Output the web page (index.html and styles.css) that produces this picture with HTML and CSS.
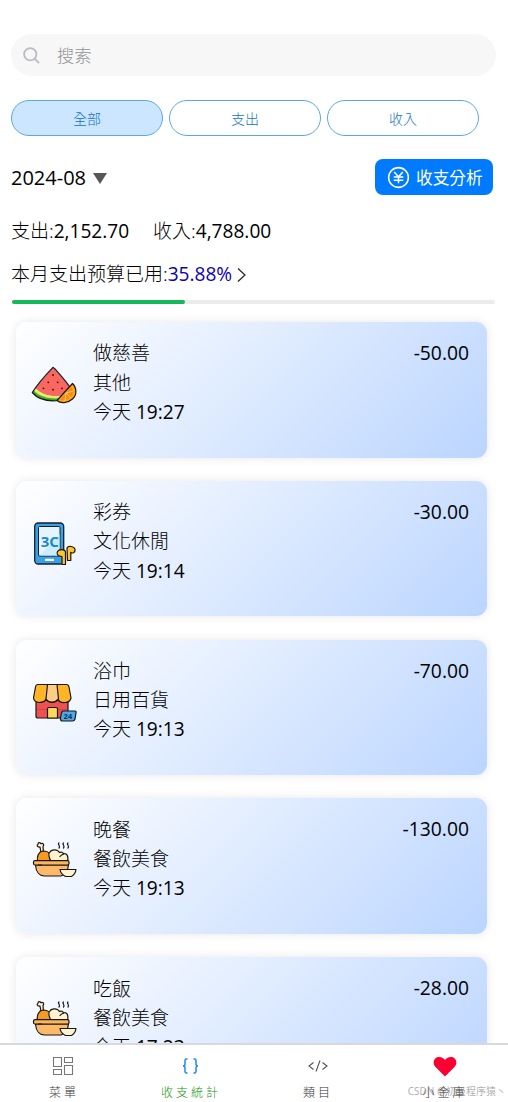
FILE: index.html
```html
<!DOCTYPE html>
<html lang="zh-Hant">
<head>
<meta charset="utf-8">
<meta name="viewport" content="width=device-width, initial-scale=1">
<title>收支統計</title>
<link rel="stylesheet" href="styles.css">
</head>
<body>
<svg class="defs" aria-hidden="true">
  <symbol id="bowl" viewBox="0 -1.500 60 55">
    <g stroke="#161616" stroke-width="1.2" stroke-linejoin="round" stroke-linecap="round">
      <path d="M16 18 15 12.500C12 13 11.500 10.500 13 9.700 13 7.800 15.500 7.700 16 9.300 18 8.200 19.800 10.300 18 12L18.500 18Z" fill="#fff3d4"/>
      <path d="M12.500 27C11.500 21 14 17 18 16.500 24 16.500 27.500 21 28 27Z" fill="#f79a20"/>
      <path d="M26 27C24 23 23 20 24.500 18 26 15 32 14 34.500 18 36 17 38 18 38.500 19.500 41 18 44 21 42.500 27Z" fill="#fff3cf"/>
      <path d="M35 22C36 20.500 37.500 20 38.500 19.500" fill="none"/>
      <path d="M10.500 30.500C11 38 15 41.500 19.500 41.500H36C40 41 43 36 43.500 30.500Z" fill="#fcb96a"/>
      <rect x="8.500" y="26.200" width="35.500" height="4.300" rx="1.500" fill="#fcb65a"/>
      <path d="M13.500 30.500H16.500" fill="none"/>
      <path d="M35 35H51C50.500 39 48 41 46.500 42H40.500C37.500 40.500 35.500 38 35 35Z" fill="#fff3cf"/>
      <path d="M26 9C24 10 28 12 26 14M30.500 9C28.500 10 32.500 12 30.500 14M35 9C33 10 37 12 35 14" fill="none" transform="translate(8 -.5)"/>
    </g>
  </symbol>
</svg>

<main class="page">
  <div class="search">
    <svg class="search-icon" viewBox="0 0 18 18"><circle cx="7.700" cy="7.700" r="6.500"/><path d="M12.300 12.300 17 17"/></svg>
    <span>搜索</span>
  </div>

  <div class="tabs">
    <div class="tab active">全部</div>
    <div class="tab">支出</div>
    <div class="tab">收入</div>
  </div>

  <div class="toolbar">
    <div class="month">2024-08 <i class="caret"></i></div>
    <div class="analyse">
      <svg viewBox="0 0 24 24"><circle cx="12" cy="12" r="10.300"/><path d="M7.500 6.300 12 11.300 16.500 6.300M12 11.300V18M7 11.500H17M7 14.800H17"/></svg>
      <span>收支分析</span>
    </div>
  </div>

  <div class="totals"><div>支出:<span class="num">2,152.70</span></div><div>收入:<span class="num">4,788.00</span></div></div>
  <div class="budget"><div>本月支出预算已用:<span class="num used">35.88%</span></div><svg viewBox="0 0 9 16"><path d="M1 1.500 8 8 1 14.500"/></svg></div>
  <div class="progress"><div class="progress-fill"></div></div>

  <div class="list">
    <div class="card">
      <svg class="pic" viewBox="0 -3 60 55">
        <path d="M10 28.500 28 7.300 45 27 36 36C27 37.500 16 34.500 10 28.500Z" fill="#fa6660"/>
        <path d="M10.500 28 7.500 32.500C14 38.500 24 41 34 40L37 35.500C27 37.500 16 34.500 10.500 28Z" fill="#dcf06a"/>
        <path d="M8.700 30.500 7.300 32.500C14 39.500 25 41.500 34 40.500V38.300C24 39 15 37 8.700 30.500Z" fill="#45a72b"/>
        <path d="M28 7.300C29 7.300 40 20 45 27L34 40.500C24 41.500 13 39.500 7.300 32.500 12 25 22 13.500 28 7.300Z" fill="none" stroke="#171717" stroke-width="1.200" stroke-linejoin="round"/>
        <g fill="#241516"><circle cx="28" cy="15" r=".9"/><circle cx="23.300" cy="22.300" r=".9"/><circle cx="32.700" cy="22.300" r=".9"/><circle cx="18.500" cy="28.300" r=".9"/><circle cx="28" cy="29.700" r=".9"/><circle cx="37" cy="28.300" r=".9"/></g>
        <path d="M47.500 23.500C52 28 52 35 47.500 39 42.500 43.500 35.500 43.500 32 40.500Z" fill="#fca51c" stroke="#1b1710" stroke-width="1.200" stroke-linejoin="round"/>
        <path d="M46.500 27C49 32 48 35 45 37.500 42 40.500 38 40.500 35 39.500Z" fill="#f88c13"/>
        <path d="M41 33 48 31M41 33 46 38M41 33 40 41" stroke="#ffd264" stroke-width=".9"/>
      </svg>
      <div class="info"><div>做慈善</div><div>其他</div><div>今天 <span class="num">19:27</span></div></div>
      <div class="amount">-50.00</div>
    </div>

    <div class="card">
      <svg class="pic" viewBox="0 0 60 55">
        <rect x="9.700" y="7" width="29" height="41" rx="3.500" fill="#3aa0e6" stroke="#12202b" stroke-width="1.300"/>
        <rect x="13.500" y="10.500" width="21.500" height="29.500" rx="1" fill="#e5f5ff" stroke="#12202b"/>
        <path d="M15 39.500 34.500 18V39.500Z" fill="#ccecff"/>
        <text x="24.800" y="30.500" class="pic-3c">3C</text>
        <rect x="20" y="42.700" width="9" height="2.300" rx=".5" fill="#fff"/>
        <g fill="#ffc52e" stroke="#1b1710" stroke-width="1.200" stroke-linejoin="round">
          <path d="M37 40.500C33 40.500 31 38 32.500 35.500 34 33 40 33 40.500 36V48.500H37Z"/>
          <path d="M42 32C43 29.500 49.500 30 50 33.500 50.500 37 47 37.500 45.800 36.500V44.500H42.500Z"/>
        </g>
      </svg>
      <div class="info"><div>彩券</div><div>文化休閒</div><div>今天 <span class="num">19:14</span></div></div>
      <div class="amount">-30.00</div>
    </div>

    <div class="card">
      <svg class="pic" viewBox="0 0 60 55">
        <g stroke="#181818" stroke-width="1.200" stroke-linejoin="round">
          <path d="M11 25H43V43H13Q11 43 11 41Z" fill="#f0504f"/>
          <path d="M12 34.500H22M32.500 34.500H42" stroke="#c9404a" stroke-width=".8" fill="none"/>
          <path d="M22.500 43V34Q22.500 32.500 24 32.500H31Q32.500 32.500 32.500 34V43Z" fill="#ffd85e"/>
          <path d="M12.500 9.500H41.500Q43.500 9.500 44 12L46 23Q45 27.500 40 27.500 34 28 33 24 31 27.500 27 27.500 23 27.500 21 24 20 27.500 14 27.500 9 27 8.500 23L10.500 12Q11 9.500 12.500 9.500Z" fill="#ffb526"/>
          <path d="M22.500 9.500H32L33.500 24Q31 27 27 27 23 27 21 24Z" fill="#ffcc87"/>
          <path d="M38 36H50Q51.500 36 51 38L50 44Q49.500 46 47.500 46H38Q35 46 35.500 43L36.500 38Q37 36 38 36Z" fill="#4ca9eb"/>
        </g>
        <text x="43" y="43.800" class="pic-24">24</text>
      </svg>
      <div class="info"><div>浴巾</div><div>日用百貨</div><div>今天 <span class="num">19:13</span></div></div>
      <div class="amount">-70.00</div>
    </div>

    <div class="card">
      <svg class="pic"><use href="#bowl"/></svg>
      <div class="info"><div>晚餐</div><div>餐飲美食</div><div>今天 <span class="num">19:13</span></div></div>
      <div class="amount">-130.00</div>
    </div>

    <div class="card">
      <svg class="pic"><use href="#bowl"/></svg>
      <div class="info"><div>吃飯</div><div>餐飲美食</div><div>今天 <span class="num">17:23</span></div></div>
      <div class="amount">-28.00</div>
    </div>
  </div>
</main>

<nav class="tabbar">
  <div class="nav-item">
    <svg class="nav-icon" viewBox="0 0 24 24"><path d="M1.500 3.500H9.500V12.500H1.500ZM12.500 3.500H20.500V8.500H12.500ZM12.500 11.500H20.500V20.500H12.500ZM1.500 15.500H9.500V20.500H1.500Z"/></svg>
    <span>菜單</span>
  </div>
  <div class="nav-item selected">
    <svg class="nav-icon" viewBox="0 0 24 24"><path d="M8.500 5H7.500Q6 5 6 6.500V10Q6 12 4 12 6 12 6 14V17.500Q6 19 7.500 19H8.500M14.500 5H15.500Q17 5 17 6.500V10Q17 12 19 12 17 12 17 14V17.500Q17 19 15.500 19H14.500"/></svg>
    <span>收支統計</span>
  </div>
  <div class="nav-item">
    <svg class="nav-icon code" viewBox="0 0 24 24"><path d="M7.500 8.500 3 12 7.500 15.500M16.500 8.500 21 12 16.500 15.500M14 6.500 10 17.500"/></svg>
    <span>類目</span>
  </div>
  <div class="nav-item">
    <svg class="nav-icon heart" viewBox="0 0 24 24"><path d="M12 22.500 2.300 12.800C-1 9 1 3 6 3 9 3 11 4.500 12 6 13 4.500 15 3 18 3 23 3 25 9 21.700 12.800Z"/></svg>
    <span>小金庫</span>
  </div>
  <div class="watermark">CSDN @初级程序猿丶</div>
</nav>
</body>
</html>
```
FILE: styles.css
```css
* {
  box-sizing: border-box;
}

body {
  margin: 0;
  height: 1102px;
  overflow: hidden;
  display: flex;
  flex-direction: column;
  background: #fff;
  color: #000;
  font: 300 19px/29px "Noto Sans", "Noto Sans CJK SC", sans-serif;
}

.defs {
  position: absolute;
  width: 0;
  height: 0;
}

.num {
  font-family: "Open Sans", "Noto Sans", sans-serif;
  font-size: 19.100px;
  font-weight: 400;
  line-height: 1;
}

.page {
  flex: 1;
  min-height: 0;
  overflow: hidden;
  padding: 34px 12px 0 11px;
}

.search {
  display: flex;
  align-items: center;
  gap: 17px;
  height: 42px;
  padding-left: 12px;
  border-radius: 21px;
  background: #f7f7f7;
  color: #949494;
  font-size: 17.300px;
}

.search-icon {
  width: 17px;
  height: 17px;
  fill: none;
  stroke: #b9bcc4;
  stroke-width: 1.9;
}

.tabs {
  display: flex;
  gap: 6px;
  margin-top: 24px;
}

.tab {
  width: 152px;
  height: 36px;
  border: 1px solid #5ba7e6;
  border-radius: 18px;
  color: #0f74c8;
  font-size: 14px;
  line-height: 35px;
  text-align: center;
}

.tab.active {
  background: #cce6ff;
}

.toolbar {
  display: flex;
  justify-content: space-between;
  align-items: center;
  height: 36px;
  margin: 23px 3px 0 0;
}

.month {
  display: flex;
  align-items: center;
  gap: 7px;
  font-family: "Open Sans", "Noto Sans", sans-serif;
  font-size: 20px;
  font-weight: 400;
}

.caret {
  margin-top: 3px;
  border: 7px solid transparent;
  border-top: 11px solid #55585b;
  border-bottom: 0;
}

.analyse {
  display: flex;
  align-items: center;
  gap: 6px;
  width: 118px;
  height: 36px;
  padding-left: 12px;
  border-radius: 8px;
  background: #007aff;
  color: #fff;
  font-size: 16.700px;
  font-weight: 400;
  white-space: nowrap;
}

.analyse svg {
  width: 23px;
  height: 23px;
  fill: none;
  stroke: #fff;
  stroke-width: 1.6;
}

.totals {
  display: flex;
  gap: 24px;
  height: 29px;
  margin-top: 22px;
}

.budget {
  display: flex;
  align-items: center;
  height: 29px;
  margin-top: 14px;
}

.used {
  color: #0c00b8;
}

.budget svg {
  width: 9px;
  height: 16px;
  margin-left: 5px;
  fill: none;
  stroke: #222;
  stroke-width: 1.2;
}

.progress {
  height: 4px;
  margin: 11px 1px 0;
  border-radius: 2px;
  background: #ebebeb;
}

.progress-fill {
  width: 35.880%;
  height: 4px;
  border-radius: 2px;
  background: #16b85c;
}

.list {
  display: flex;
  flex-direction: column;
  gap: 23.300px;
  margin: 18px 9px 0 4.500px;
}

.card {
  display: flex;
  flex: none;
  height: 135.500px;
  padding: 17px 18px 0 9.500px;
  border-radius: 11px;
  background: linear-gradient(135deg, #fff, #bbd5ff);
  box-shadow: 0 0 10px rgba(0, 0, 0, .1);
}

.pic {
  width: 60px;
  height: 55px;
  margin-top: 18px;
}

.pic-3c {
  font: 700 15px "Noto Sans", sans-serif;
  fill: #2286ca;
  text-anchor: middle;
}

.pic-24 {
  font: 700 7.500px "Liberation Sans", sans-serif;
  fill: #102536;
  text-anchor: middle;
}

.info {
  flex: 1;
  margin-left: 8px;
  padding-top: .4px;
  line-height: 29.200px;
}

.amount {
  font-family: "Open Sans", "Noto Sans", sans-serif;
  font-size: 19.300px;
  font-weight: 400;
  line-height: 27px;
}

.tabbar {
  position: relative;
  display: flex;
  height: 59px;
  padding-top: 10px;
  border-top: 2px solid #d8d9db;
  background: #fff;
}

.nav-item {
  flex: 1;
  display: flex;
  flex-direction: column;
  align-items: center;
  color: #333;
  font-size: 12px;
  line-height: 16px;
  letter-spacing: 3px;
}

.nav-item span {
  margin: 7px -1px 0 0;
}

.nav-item.selected {
  color: #169410;
}

.nav-icon {
  width: 24px;
  height: 24px;
  margin-top: -1px;
  fill: none;
  stroke: #777;
  stroke-width: 1.1;
}

.selected .nav-icon {
  stroke: #1989fa;
  stroke-width: 1.5;
}

.nav-icon.code {
  stroke: #555;
}

.nav-icon.heart {
  fill: #fb0030;
  stroke: none;
}

.watermark {
  position: absolute;
  right: 2px;
  bottom: 3px;
  color: rgba(120, 120, 120, .6);
  font-size: 10px;
  font-weight: 400;
  line-height: 16px;
  white-space: nowrap;
}
```
